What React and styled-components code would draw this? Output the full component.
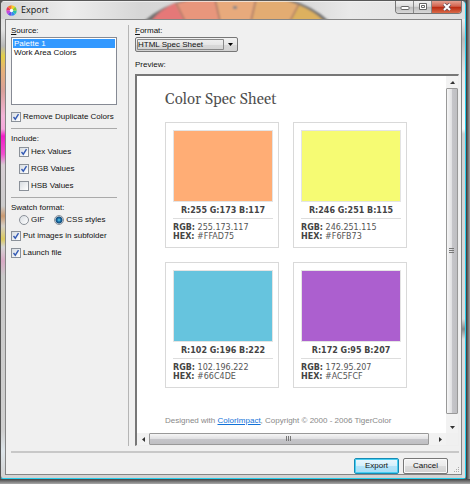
import React, { useState } from "react";
import styled, { createGlobalStyle, css } from "styled-components";

const GlobalStyle = createGlobalStyle`
  *, *::before, *::after { box-sizing: border-box; }
  body {
    margin: 0;
    background: #7c7f81;
    font: 8px/12px "Liberation Sans", Arial, sans-serif;
    color: #111;
  }
  button, select, input { font: inherit; color: inherit; margin: 0; }
`;

const Desktop = styled.div`
  min-height: 100vh;
  display: flex;
  padding: 0 4px 5px 0;
  background: linear-gradient(#0000 calc(100% - 5px), #444 calc(100% - 5px), #aaa),
    linear-gradient(90deg, #555 calc(100% - 4px), #333 calc(100% - 4px), #a5a5a5);
`;

const Window = styled.div`
  position: relative;
  flex: 1;
  min-width: 0;
  display: flex;
  flex-direction: column;
  padding: 0 3px 3px 4px;
  border: 1px solid;
  border-color: #585858 #25cfee #25cfee #555;
  border-radius: 5px 5px 3px 3px;
  background: linear-gradient(
    #dedede 0, #e4e4e4 28px, #b9b9b9 45px, #e3cf45 55px, #e5b07a 70px, #d9a09a 90px,
    #f3b5d8 115px, #f4a8dc 128px, #f21cc8 135px, #f04fcf 153px, #d8cfd4 164px,
    #cccccc 205px, #cb9a70 215px, #d5d0c8 225px, #dcc95a 238px, #d6d6d6 246px,
    #d8a9c4 260px, #c9c9c9 275px, #cfcfcf 430px, #dde5ea 450px, #d2d2d2 100%
  );
`;

const GlassArt = styled.svg`
  position: absolute;
  top: 0;
  left: 0;
  width: 100%;
  height: 18px;
  border-radius: 4px 4px 0 0;
`;

const RightGlass = styled.div`
  position: absolute;
  top: 18px;
  right: 0;
  bottom: 0;
  width: 3px;
  background: linear-gradient(#eee, #bbb 20px, #e8e8e8 55px, #f8f8f8 110px, #d0d0d0 115px, #ddd 300px, #888 310px, #ddd 320px);
`;

const TitleBar = styled.header`
  position: relative;
  height: 18px;
  display: flex;
  align-items: center;
  padding-left: 1px;
`;

const Title = styled.h1`
  flex: 1;
  margin: 0 0 0 4px;
  font: 9px/14px "Open Sans", "Noto Sans", sans-serif;
  color: #111;
`;

const WindowControls = styled.div`
  align-self: flex-start;
  display: flex;
  border: 1px solid #777;
  border-top: 0;
  border-radius: 0 0 4px 4px;
  overflow: hidden;
`;

const ControlButton = styled.button`
  display: grid;
  place-items: center;
  width: ${(p) => (p.$close ? 29 : 18)}px;
  height: 12px;
  padding: 0;
  border: 0;
  border-right: ${(p) => (p.$close ? 0 : 1)}px solid #888;
  background: ${(p) =>
    p.$close
      ? "linear-gradient(#e5a191, #d2614c 45%, #b9280f 50%, #d96a48)"
      : "linear-gradient(#f0f0f0, #dcdcdc 45%, #bcbcbc 50%, #d8d8d8)"};
`;

const Client = styled.main`
  position: relative;
  flex: 1;
  display: flex;
  flex-direction: column;
  border: 1px solid #858585;
  background: #f0f0f0;
  padding: 5px 2px 0 5px;
`;

const Body = styled.div`
  flex: 1;
  display: flex;
  padding-bottom: 5px;
`;

const Sidebar = styled.form`
  width: 118px;
  flex: none;
  border-right: 1px solid #b5b5b5;
  padding-right: 11px;
  margin-right: 6px;
  display: flex;
  flex-direction: column;
`;

const Label = styled.label`
  display: block;
  height: 12px;
  white-space: nowrap;
`;

const List = styled.ul`
  height: 68px;
  margin: 0 0 4px;
  padding: 1px;
  list-style: none;
  border: 1px solid #868a94;
  background: #fff;
`;

const ListItem = styled.li`
  height: 9px;
`;

const ListButton = styled.button`
  display: block;
  width: 100%;
  height: 9px;
  padding: 0 1px;
  border: 0;
  text-align: left;
  line-height: 9px;
  background: ${(p) => (p.$selected ? "#3399ff" : "transparent")};
  color: ${(p) => (p.$selected ? "#fff" : "#111")};
`;

const Group = styled.fieldset`
  min-width: 0;
  margin: 0;
  padding: ${(p) => (p.$ruled ? "6px 0 3px" : "0 0 4px")};
  border: 0;
  border-top: ${(p) => (p.$ruled ? 1 : 0)}px solid #aaa;
`;

const Legend = styled.div`
  line-height: 8px;
`;

const Choices = styled.div`
  padding-left: 8px;
  display: flex;
  flex-wrap: wrap;
  column-gap: 10px;
`;

const Choice = styled.label`
  display: flex;
  align-items: center;
  gap: 2px;
  height: ${(p) => (p.$short ? 15 : 17)}px;
  white-space: nowrap;
  flex-basis: ${(p) => (p.$wide ? "100%" : "auto")};
`;

const boxStyle = css`
  appearance: none;
  flex: none;
  width: 10px;
  height: 10px;
  border: 1px solid #8b9199;
  background: linear-gradient(135deg, #d8dde2, #fff);
`;

const CheckBox = styled.input.attrs({ type: "checkbox" })`
  ${boxStyle}
  &:checked {
    background: no-repeat center / 8px 8px
        url("data:image/svg+xml,%3Csvg xmlns='http://www.w3.org/2000/svg' viewBox='0 0 8 8'%3E%3Cpath d='M1.5 4 3.3 6.2 6.5 1.2' fill='none' stroke='%23355bb5' stroke-width='1.4'/%3E%3C/svg%3E"),
      linear-gradient(135deg, #d8dde2, #fff);
  }
`;

const Radio = styled.input.attrs({ type: "radio" })`
  ${boxStyle}
  border-radius: 50%;
  &:checked {
    background: radial-gradient(circle at 50% 50%, #59d3f5 0, #17659c 2px, #174e7c 3px, #e2e7eb 4px);
  }
`;

const Output = styled.section`
  flex: 1;
  min-width: 0;
  display: flex;
  flex-direction: column;
`;

const FormatSelect = styled.select`
  appearance: none;
  width: 103px;
  height: 15px;
  padding: 0 17px 0 2px;
  margin-bottom: 7px;
  border: 1px solid #777;
  border-radius: 2px;
  line-height: 12px;
  outline: 0;
  background: no-repeat right 3px center / 7px 4px
      url("data:image/svg+xml,%3Csvg xmlns='http://www.w3.org/2000/svg' viewBox='0 0 7 4'%3E%3Cpath d='M1 0h5L3.5 3z'/%3E%3C/svg%3E"),
    no-repeat 1px 1px / 87px 11px
      url("data:image/svg+xml,%3Csvg xmlns='http://www.w3.org/2000/svg' viewBox='0 0 87 11'%3E%3Cpath d='M.5.5h86v10H.5z' fill='none' stroke='%23888'/%3E%3C/svg%3E"),
    linear-gradient(#f2f2f2, #e6e6e6 50%, #d8d8d8 51%, #d2d2d2);
`;

const Preview = styled.div`
  flex: 1;
  margin-top: 3px;
  display: grid;
  grid-template: 1fr 12px / 1fr 12px;
  border: 1px solid #eee;
  border-top: 2px solid #777;
  border-left: 2px solid #777;
  background: #fff;
`;

const Sheet = styled.article`
  padding: 15px 28px 0;
  min-width: 0;
  color: #555;
`;

const SheetTitle = styled.h2`
  margin: 0 0 13px;
  font: 15px/18px Gelasio, "Liberation Serif", serif;
  color: #505050;
`;

const Cards = styled.div`
  display: grid;
  grid-template-columns: repeat(auto-fill, 114px);
  gap: 14px;
`;

const Card = styled.section`
  height: 126px;
  border: 1px solid #d9d9d9;
  padding: 7px 5px 0 7px;
  font: 8px/9px "DejaVu Sans", Verdana, sans-serif;
  white-space: nowrap;
`;

const Swatch = styled.div`
  height: 72px;
  background: ${(p) => p.$color};
  border: 1px solid #e4e4e4;
`;

const CardTitle = styled.h3`
  margin: 0 0 4px;
  padding: 4px 0 3px;
  border-bottom: 1px solid #ddd;
  font-size: 8px;
  line-height: 9px;
  text-align: center;
  color: #444;
`;

const Value = styled.div`
  strong { color: #444; }
`;

const Credit = styled.footer`
  margin-top: 27px;
  color: #888;
  white-space: nowrap;
`;

const Link = styled.a`
  color: #1272d8;
`;

const Bar = styled.div`
  display: flex;
  flex-direction: ${(p) => (p.$vertical ? "column" : "row")};
  background: #f2f2f2;
`;

const Corner = styled.div`
  background: #f0f0f0;
`;

const Arrow = styled.button`
  display: grid;
  place-items: center;
  flex: none;
  width: 12px;
  height: 12px;
  padding: 0;
  border: 0;
  background: none;
`;

const Thumb = styled.div`
  flex: 1;
  display: grid;
  place-items: center;
  border: 1px solid #999;
  border-radius: 1px;
  background: linear-gradient(${(p) => (p.$vertical ? "90deg" : "180deg")}, #f6f6f6, #e2e2e4 45%, #c5c5c9 55%, #bfbfc2);
  margin: ${(p) => (p.$vertical ? "0 0 7px" : "0 5px 0 0")};
`;

const Actions = styled.footer`
  display: flex;
  justify-content: flex-end;
  gap: 4px;
  border-top: 2px solid #c8c8c8;
  padding: 5px 11px 0 0;
`;

const ActionButton = styled.button`
  width: 45px;
  height: 16px;
  padding: 0;
  border: 1px solid ${(p) => (p.$primary ? "#168bb5" : "#777")};
  border-radius: 2px;
  line-height: 14px;
  background: ${(p) =>
    p.$primary
      ? "linear-gradient(#eaf7fd, #d3f0fc 50%, #b2e3f8 51%, #a8def6)"
      : "linear-gradient(#f3f3f3, #ebebeb 50%, #dcdcdc 51%, #d2d2d2)"};
  box-shadow: inset 0 0 0 1px ${(p) => (p.$primary ? "#48cff2" : "#fafafa")};
`;

const Grip = styled.svg`
  position: absolute;
  right: 1px;
  bottom: 1px;
`;

const arrowPaths = {
  up: "M0 4 3 1 5 4z",
  down: "M0 1h5L2.5 4z",
  left: "M4 0v5L1 2.5z",
  right: "M1 0v5L4 2.5z",
};

function ScrollArrow({ direction }) {
  return (
    <Arrow type="button" aria-label={`Scroll ${direction}`}>
      <svg width="5" height="5" viewBox="0 0 5 5"><path d={arrowPaths[direction]} fill="#333" /></svg>
    </Arrow>
  );
}

function ScrollBar({ vertical }) {
  return (
    <Bar $vertical={vertical}>
      <ScrollArrow direction={vertical ? "up" : "left"} />
      <Thumb $vertical={vertical}>
        <svg width="6" height="6" viewBox="0 0 6 6">
          <path d={vertical ? "M0 .5h5M0 2.5h5M0 4.5h5" : "M.5 0v5M2.5 0v5M4.5 0v5"} stroke="#777" />
        </svg>
      </Thumb>
      <ScrollArrow direction={vertical ? "down" : "right"} />
    </Bar>
  );
}

function Backdrop() {
  return (
    <GlassArt viewBox="0 0 465 18" preserveAspectRatio="xMinYMin slice" aria-hidden="true">
      <defs>
        <linearGradient id="glass">
          <stop offset="0" stopColor="#d4d4d4" /><stop offset=".15" stopColor="#ededed" />
          <stop offset=".3" stopColor="#d6d6d6" /><stop offset=".65" stopColor="#d9d9d9" />
          <stop offset=".75" stopColor="#e9e9e9" /><stop offset="1" stopColor="#dedede" />
        </linearGradient>
        <filter id="soft"><feGaussianBlur stdDeviation="1" /></filter>
      </defs>
      <path d="M0 0h465v18H0z" fill="url(#glass)" />
      <g filter="url(#soft)">
        <path d="M143 20Q160 5 187-2H287Q312 5 328 20z" fill="#707070" />
        <path d="M150 20Q160 8 174 2L184 20z" fill="#e57878" />
        <path d="M174 3 192-2H214L219 20H183z" fill="#e8967c" />
        <path d="M214-2H255L250 20H219z" fill="#e8aa7c" />
        <path d="M255-2H282L298 4 290 20H250z" fill="#e3ac72" />
        <path d="M298 4Q313 10 323 20H288z" fill="#ddb15f" />
        <path d="M175 2 184 20M214-2 219 20M255-2 250 20M298 3 289 20" stroke="#a77767" strokeWidth="1.5" />
        <path d="M232 5h4v3h-4z" fill="#888" />
      </g>
      <path d="M0 .5h465" stroke="#f5f5f5" opacity=".7" />
    </GlassArt>
  );
}

function AppIcon() {
  const colors = ["#f9cf23", "#f77b27", "#e93557", "#c844dc", "#654be8", "#328af2", "#29bfa8", "#83cb35"];
  return (
    <svg width="11" height="11" viewBox="-6 -6 12 12" aria-hidden="true">
      {colors.map((color, i) => (
        <path key={color} d="M0 0V-5.7A5.7 5.7 0 0 1 4.03-4.03z" fill={color} transform={`rotate(${-i * 45})`} />
      ))}
      <circle r="1.8" fill="#fff" />
    </svg>
  );
}

const swatches = [
  [255, 173, 117, "#FFAD75"],
  [246, 251, 115, "#F6FB73"],
  [102, 196, 222, "#66C4DE"],
  [172, 95, 207, "#AC5FCF"],
];

function ColorCard({ color: [r, g, b, hex] }) {
  return (
    <Card>
      <Swatch $color={hex} />
      <CardTitle>R:{r} G:{g} B:{b}</CardTitle>
      <Value><strong>RGB:</strong> {r}.{g}.{b}</Value>
      <Value><strong>HEX:</strong> {hex}</Value>
    </Card>
  );
}

function Check({ children, checked = true, ...rest }) {
  return <Choice {...rest}><CheckBox defaultChecked={checked} />{children}</Choice>;
}

export default function App() {
  const [source, setSource] = useState("Palette 1");
  return (
    <Desktop>
      <GlobalStyle />
      <Window>
        <Backdrop />
        <RightGlass />
        <TitleBar>
          <AppIcon />
          <Title>Export</Title>
          <WindowControls>
            <ControlButton aria-label="Minimize">
              <svg width="10" height="8" viewBox="0 0 10 8"><rect x="1" y="3.5" width="8" height="3" rx="1" fill="#fff" stroke="#666" /></svg>
            </ControlButton>
            <ControlButton aria-label="Maximize">
              <svg width="10" height="8" viewBox="0 0 10 8"><path d="M1.5.5h7v6h-7zM3.5 2.5h3v2h-3z" fill="#fff" stroke="#666" /></svg>
            </ControlButton>
            <ControlButton $close aria-label="Close">
              <svg width="10" height="8" viewBox="0 0 10 8">
                <path d="m2 1 6 6M8 1 2 7" stroke="#6d5157" strokeWidth="3.6" />
                <path d="m2 1 6 6M8 1 2 7" stroke="#fff" strokeWidth="2" />
              </svg>
            </ControlButton>
          </WindowControls>
        </TitleBar>
        <Client>
          <Body>
            <Sidebar>
              <Label as="div" id="source-label"><u>S</u>ource:</Label>
              <List aria-labelledby="source-label">
                {["Palette 1", "Work Area Colors"].map((name) => (
                  <ListItem key={name}>
                    <ListButton type="button" $selected={source === name} aria-pressed={source === name} onClick={() => setSource(name)}>
                      {name}
                    </ListButton>
                  </ListItem>
                ))}
              </List>
              <Group><Check $short>Remove Duplicate Colors</Check></Group>
              <Group $ruled aria-label="Include">
                <Legend>Include:</Legend>
                <Choices>
                  <Check $wide>Hex Values</Check>
                  <Check $wide>RGB Values</Check>
                  <Check $wide checked={false}>HSB Values</Check>
                </Choices>
              </Group>
              <Group $ruled aria-label="Swatch format">
                <Legend>Swatch format:</Legend>
                <Choices>
                  <Choice $short><Radio name="swatch" />GIF</Choice>
                  <Choice $short><Radio name="swatch" defaultChecked />CSS styles</Choice>
                </Choices>
                <Check>Put images in subfolder</Check>
                <Check>Launch file</Check>
              </Group>
            </Sidebar>
            <Output>
              <Label htmlFor="format"><u>F</u>ormat:</Label>
              <FormatSelect id="format"><option>HTML Spec Sheet</option></FormatSelect>
              <Label as="div">Preview:</Label>
              <Preview>
                <Sheet>
                  <SheetTitle>Color Spec Sheet</SheetTitle>
                  <Cards>{swatches.map((c) => <ColorCard key={c[3]} color={c} />)}</Cards>
                  <Credit>
                    Designed with <Link href="#colorimpact">ColorImpact</Link>, Copyright © 2000 - 2006 TigerColor
                  </Credit>
                </Sheet>
                <ScrollBar vertical />
                <ScrollBar />
                <Corner />
              </Preview>
            </Output>
          </Body>
          <Actions>
            <ActionButton type="button" $primary>Export</ActionButton>
            <ActionButton type="button">Cancel</ActionButton>
          </Actions>
          <Grip width="6" height="6" viewBox="0 0 6 6" aria-hidden="true">
            <path d="M4 0h1v1H4zM2 2h1v1H2zM4 2h1v1H4zM0 4h1v1H0zM2 4h1v1H2zM4 4h1v1H4z" fill="#aaa" />
          </Grip>
        </Client>
      </Window>
    </Desktop>
  );
}
